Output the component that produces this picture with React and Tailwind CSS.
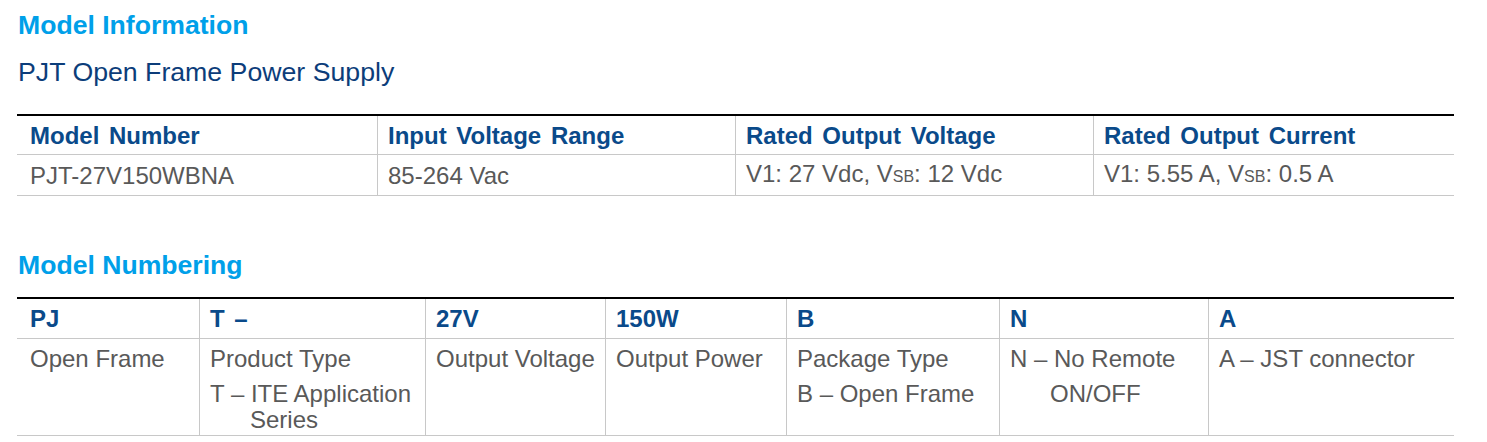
import React from "react";

const font = { fontFamily: '"Liberation Sans", Arial, sans-serif' };

function Sub({ children }) {
  return <span className="text-[16px] align-baseline">{children}</span>;
}

export default function App() {
  const t1cols = "grid-cols-[360px_358px_358px_361px]";
  const t2cols = "grid-cols-[182px_226px_180px_181px_213px_209px_246px]";
  const hdr = "text-[24px] leading-[27px] font-bold text-[#0a4a8a] [word-spacing:3px] flex items-center pl-[10px]";
  const body = "text-[24px] leading-[27px] text-[#595959] flex items-center pl-[10px]";
  const body2 = "text-[24px] leading-[26px] text-[#595959] pl-[10px] pt-[7px]";
  const first = "!pl-[13px]";

  return (
    <div className="bg-white w-[1487px] h-[442px] pl-[18px] pt-[10px]" style={font}>
      <h2 className="text-[26.6px] leading-[30px] font-bold text-[#00a0e9]">Model Information</h2>
      <p className="mt-[17px] text-[26.7px] leading-[30px] text-[#0c3d7a]">PJT Open Frame Power Supply</p>

      <div className="mt-[27px] w-[1437px] -ml-px border-t-2 border-black">
        <div className={`grid ${t1cols} h-[39px] border-b border-[#c8c8c8]`}>
          <div className={`${hdr} ${first}`}>Model Number</div>
          <div className={`${hdr} border-l border-[#c8c8c8]`}>Input Voltage Range</div>
          <div className={`${hdr} border-l border-[#c8c8c8]`}>Rated Output Voltage</div>
          <div className={`${hdr} border-l border-[#c8c8c8]`}>Rated Output Current</div>
        </div>
        <div className={`grid ${t1cols} h-[41px] border-b border-[#c8c8c8]`}>
          <div className={`${body} ${first}`}>PJT-27V150WBNA</div>
          <div className={`${body} border-l border-[#c8c8c8]`}>85-264 Vac</div>
          <div className={`${body} border-l border-[#c8c8c8]`}>
            <span>V1: 27 Vdc, V<Sub>SB</Sub>: 12 Vdc</span>
          </div>
          <div className={`${body} border-l border-[#c8c8c8]`}>
            <span>V1: 5.55 A, V<Sub>SB</Sub>: 0.5 A</span>
          </div>
        </div>
      </div>

      <h2 className="mt-[54px] text-[26.6px] leading-[30px] font-bold text-[#00a0e9]">Model Numbering</h2>

      <div className="mt-[17px] w-[1437px] -ml-px border-t-2 border-black">
        <div className={`grid ${t2cols} h-[40px] border-b border-[#c8c8c8]`}>
          <div className={`${hdr} ${first}`}>PJ</div>
          <div className={`${hdr} border-l border-[#c8c8c8]`}>T –</div>
          <div className={`${hdr} border-l border-[#c8c8c8]`}>27V</div>
          <div className={`${hdr} border-l border-[#c8c8c8]`}>150W</div>
          <div className={`${hdr} border-l border-[#c8c8c8]`}>B</div>
          <div className={`${hdr} border-l border-[#c8c8c8]`}>N</div>
          <div className={`${hdr} border-l border-[#c8c8c8]`}>A</div>
        </div>
        <div className={`grid ${t2cols} h-[97px] border-b border-[#c8c8c8]`}>
          <div className={`${body2} ${first}`}>Open Frame</div>
          <div className={`${body2} border-l border-[#c8c8c8]`}>
            <div>Product Type</div>
            <div className="mt-[9px]">T – ITE Application</div>
            <div className="pl-10">Series</div>
          </div>
          <div className={`${body2} border-l border-[#c8c8c8]`}>Output Voltage</div>
          <div className={`${body2} border-l border-[#c8c8c8]`}>Output Power</div>
          <div className={`${body2} border-l border-[#c8c8c8]`}>
            <div>Package Type</div>
            <div className="mt-[9px]">B – Open Frame</div>
          </div>
          <div className={`${body2} border-l border-[#c8c8c8]`}>
            <div>N – No Remote</div>
            <div className="mt-[9px] pl-10">ON/OFF</div>
          </div>
          <div className={`${body2} border-l border-[#c8c8c8]`}>A – JST connector</div>
        </div>
      </div>
    </div>
  );
}
